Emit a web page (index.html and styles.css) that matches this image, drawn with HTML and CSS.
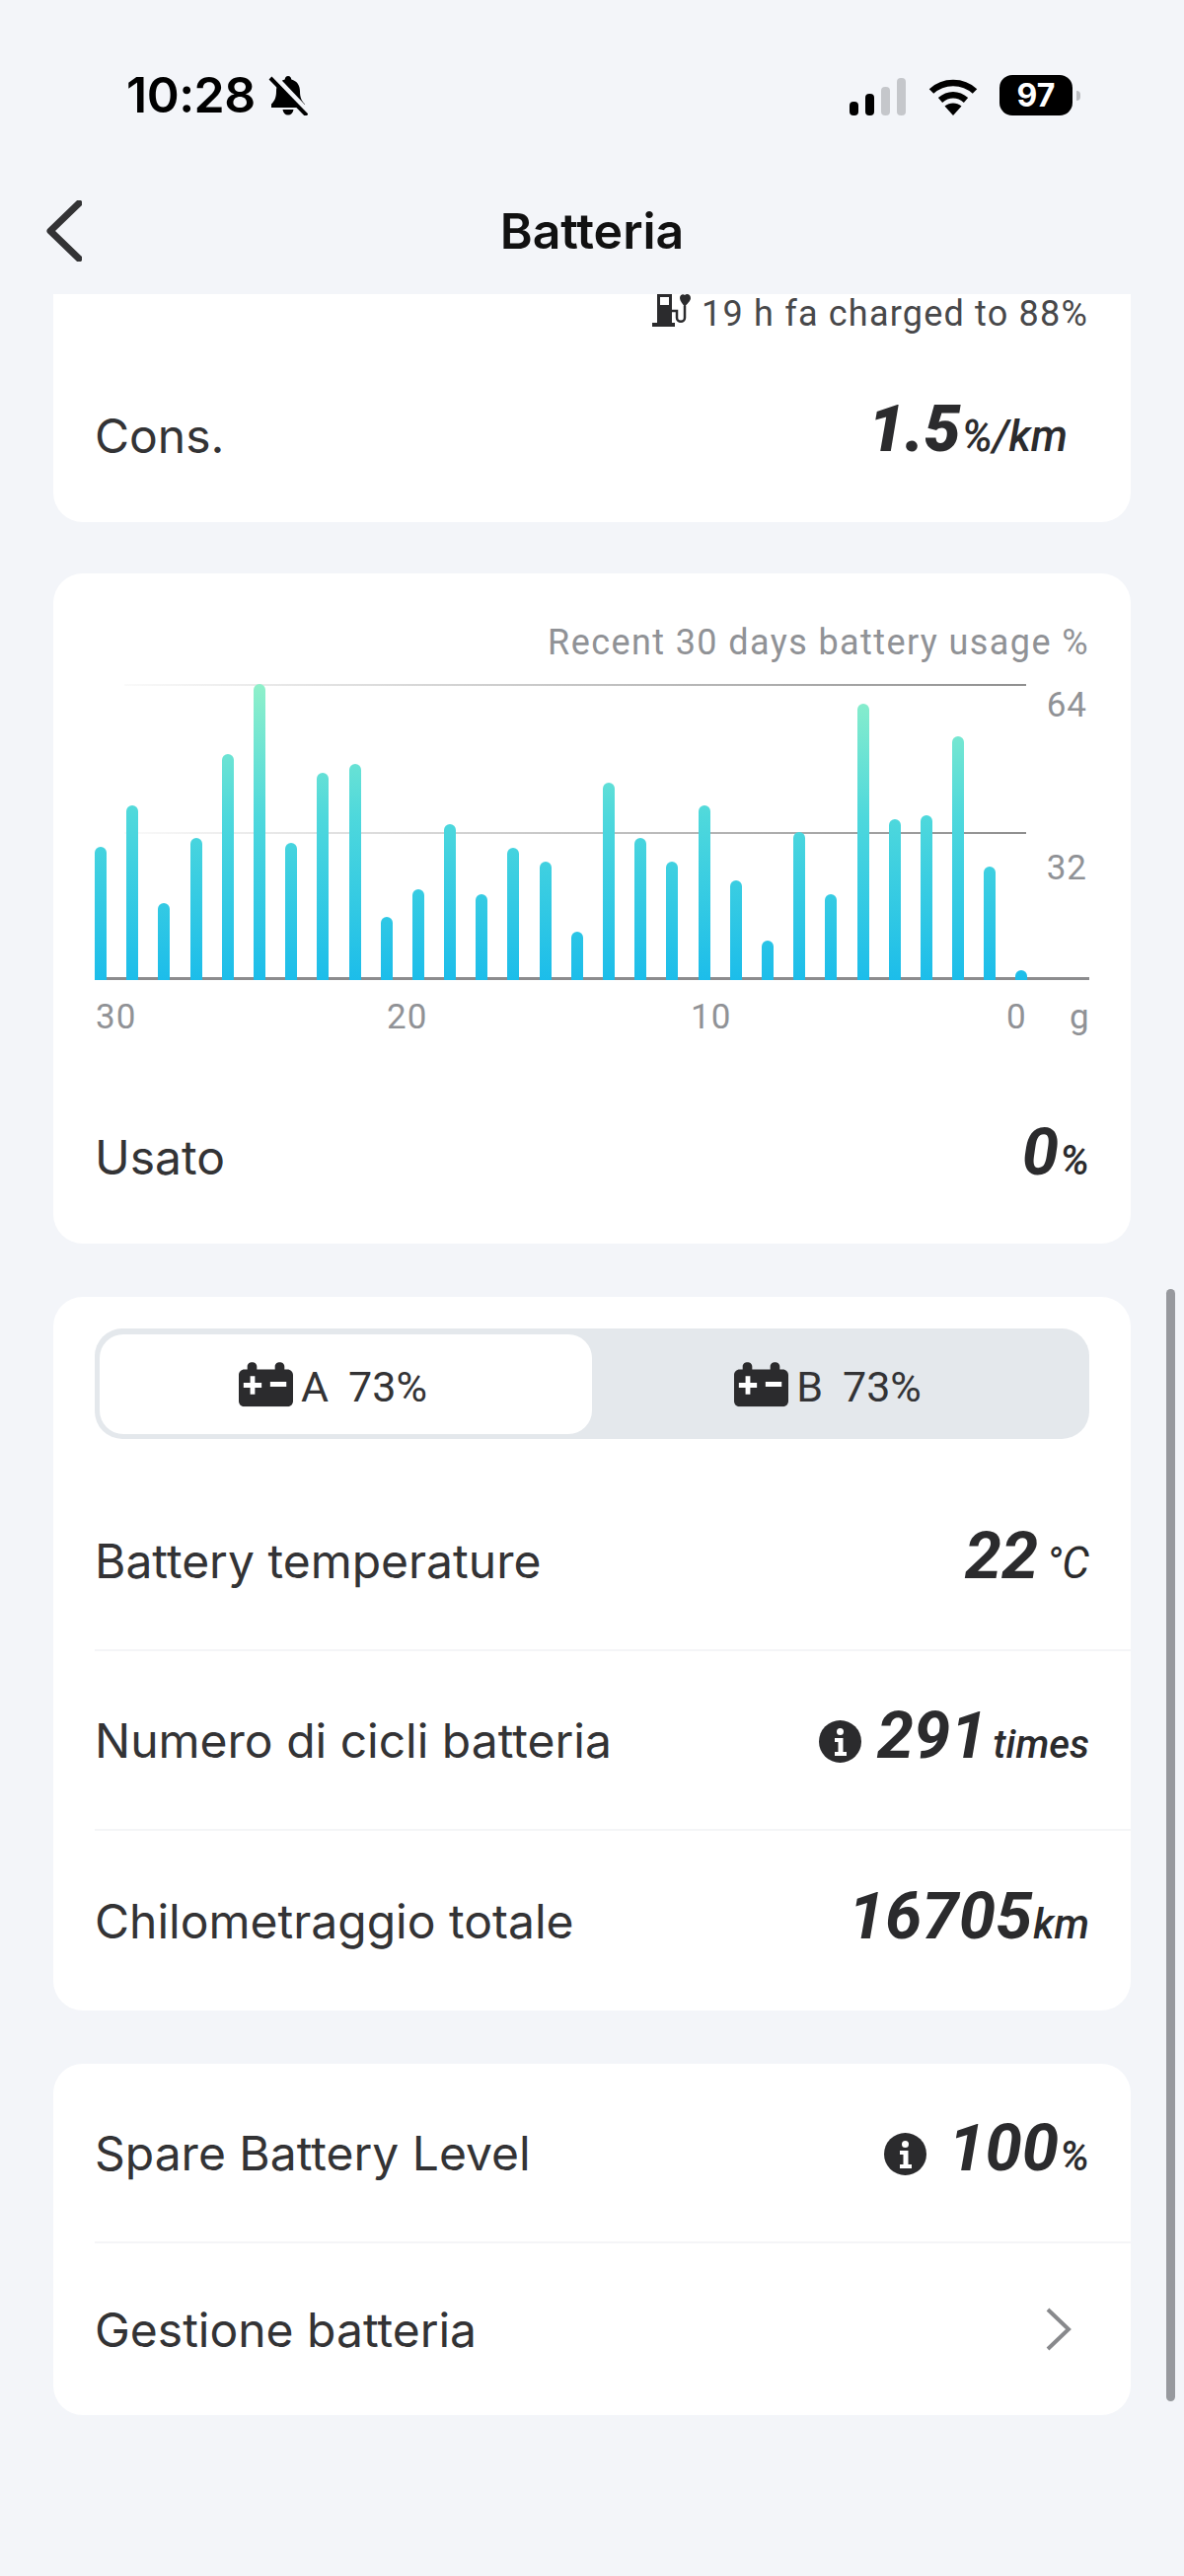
FILE: index.html
```html
<!DOCTYPE html>
<html lang="it">
<head>
<meta charset="utf-8">
<title>Batteria</title>
<link rel="stylesheet" href="styles.css">
</head>
<body>
<div class="screen">
  <header class="status">
    <div class="status-left">
      <span class="time">10:28</span>
      <svg class="bell" viewBox="0 0 40 41"><path d="M20 1c2 0 3 1.500 3.300 3.500 5.700 1.500 8.700 6 8.700 12 0 6 1.500 9.500 5 13v3.500H3V29.500c3.500-3.500 5-7 5-13 0-6 3-10.500 8.700-12C17 2.500 18 1 20 1zM14.500 35h11c-.5 3.500-2.500 5.500-5.500 5.500s-5-2-5.500-5.500z"/><path class="bell-gap" d="M5 0l35 37"/><path class="bell-line" d="M2 3l37 38"/></svg>
    </div>
    <div class="status-right">
      <div class="signal">
        <span class="sig sig1"></span><span class="sig sig2"></span><span class="sig sig3 off"></span><span class="sig sig4 off"></span>
      </div>
      <svg class="wifi" viewBox="0 0 50 38"><path class="wifi-arc" d="M3 13.500C15 2 35 2 47 13.500"/><path class="wifi-arc" d="M12 22.500c8-7 18-7 26 0"/><path d="M16.500 28.500c5-4 12-4 17 0L25 38z"/></svg>
      <div class="batt"><span class="batt-body">97</span><span class="batt-nub"></span></div>
    </div>
  </header>

  <nav class="nav">
    <svg class="back" viewBox="0 0 36 62"><path d="M33 3L4 31l29 28"/></svg>
    <h1 class="title">Batteria</h1>
  </nav>

  <main class="content">
    <section class="card card-clipped">
      <div class="charged">
        <svg class="pump" viewBox="0 0 40 33"><path fill-rule="evenodd" d="M5 0h15v29h3v4H0v-4h5zM8 3v8h9V3z"/><path class="pump-cable" d="M20 17h5v7c0 5 8 5 8 0V12"/><path d="M28 4c0-3 3-5 5-3 2-2 6-1 6 3 0 3-4 6-6 9-2-3-5-6-5-9z"/></svg>
        <span>19 h fa charged to 88%</span>
      </div>
      <div class="row row-cons">
        <span class="label">Cons.</span>
        <span class="value value-cons"><b class="num num-cons">1.5</b><i class="unit unit-cons">%/km</i></span>
      </div>
    </section>

    <section class="card card-chart">
      <p class="chart-title">Recent 30 days battery usage %</p>
      <div class="chart">
        <span class="grid-line grid-top"></span>
        <span class="grid-line grid-mid"></span>
        <span class="y-label y-64">64</span>
        <span class="y-label y-32">32</span>
        <div class="bars">
          <span class="bar" style="height:135px"></span>
          <span class="bar" style="height:177px"></span>
          <span class="bar" style="height:78px"></span>
          <span class="bar" style="height:144px"></span>
          <span class="bar" style="height:229px"></span>
          <span class="bar" style="height:300px"></span>
          <span class="bar" style="height:139px"></span>
          <span class="bar" style="height:210px"></span>
          <span class="bar" style="height:219px"></span>
          <span class="bar" style="height:64px"></span>
          <span class="bar" style="height:92px"></span>
          <span class="bar" style="height:158px"></span>
          <span class="bar" style="height:87px"></span>
          <span class="bar" style="height:134px"></span>
          <span class="bar" style="height:120px"></span>
          <span class="bar" style="height:49px"></span>
          <span class="bar" style="height:200px"></span>
          <span class="bar" style="height:144px"></span>
          <span class="bar" style="height:120px"></span>
          <span class="bar" style="height:177px"></span>
          <span class="bar" style="height:101px"></span>
          <span class="bar" style="height:40px"></span>
          <span class="bar" style="height:150px"></span>
          <span class="bar" style="height:87px"></span>
          <span class="bar" style="height:280px"></span>
          <span class="bar" style="height:163px"></span>
          <span class="bar" style="height:167px"></span>
          <span class="bar" style="height:247px"></span>
          <span class="bar" style="height:115px"></span>
          <span class="bar" style="height:10px"></span>
        </div>
      </div>
      <div class="x-axis"><span>30</span><span>20</span><span>10</span><span>0</span><span>g</span></div>
      <div class="row row-usato">
        <span class="label">Usato</span>
        <span class="value"><b class="num">0</b><i class="unit">%</i></span>
      </div>
    </section>

    <section class="card card-packs">
      <div class="segment">
        <div class="seg-tab seg-active">
          <svg class="pack" viewBox="0 0 57 47"><use href="#pack-icon"/></svg>
          <span class="seg-text">A</span><span class="seg-text seg-pct">73%</span>
        </div>
        <div class="seg-tab">
          <svg class="pack" viewBox="0 0 57 47"><use href="#pack-icon"/></svg>
          <span class="seg-text">B</span><span class="seg-text seg-pct">73%</span>
        </div>
      </div>
      <div class="row">
        <span class="label">Battery temperature</span>
        <span class="value"><b class="num">22</b><i class="unit unit-deg">°C</i></span>
      </div>
      <div class="row">
        <span class="label">Numero di cicli batteria</span>
        <span class="value">
          <svg class="info" viewBox="0 0 43 43"><use href="#info-icon"/></svg>
          <b class="num">291</b><i class="unit unit-times">times</i>
        </span>
      </div>
      <div class="row row-last">
        <span class="label">Chilometraggio totale</span>
        <span class="value"><b class="num">16705</b><i class="unit">km</i></span>
      </div>
    </section>

    <section class="card">
      <div class="row">
        <span class="label">Spare Battery Level</span>
        <span class="value">
          <svg class="info info-spare" viewBox="0 0 43 43"><use href="#info-icon"/></svg>
          <b class="num">100</b><i class="unit">%</i>
        </span>
      </div>
      <div class="row row-short row-last">
        <span class="label">Gestione batteria</span>
        <svg class="chev" viewBox="0 0 26 44"><path d="M2 2l21 20L2 42"/></svg>
      </div>
    </section>
  </main>

  <div class="scrollbar"></div>

  <svg class="defs" aria-hidden="true">
    <symbol id="pack-icon" viewBox="0 0 57 47">
      <path fill="#2b2b2d" d="M9 8V5c0-6 10-6 10 0v3h19V5c0-6 10-6 10 0v3h3c3.500 0 6 2.500 6 6v27c0 3.500-2.500 6-6 6H6c-3.500 0-6-2.500-6-6V14c0-3.500 2.500-6 6-6z"/>
      <path fill="#fff" d="M12 15h5v7h7v5h-7v7h-5v-7H5v-5h7zM33 21h17v5H33z"/>
    </symbol>
    <symbol id="info-icon" viewBox="0 0 43 43">
      <circle cx="21.500" cy="21.500" r="21.500" fill="#2b2b2d"/>
      <circle cx="21.500" cy="11.500" r="3.500" fill="#fff"/>
      <path fill="#fff" d="M16 18h8.500v14H28v4H16v-4h3.500V22H16z"/>
    </symbol>
  </svg>
</div>
</body>
</html>
```

FILE: styles.css
```css
* { box-sizing: border-box; }

html, body { margin: 0; padding: 0; }

body {
  background: #f3f5f9;
  font-family: Inter, "Liberation Sans", sans-serif;
  color: #333335;
}

.screen {
  position: relative;
  width: 1200px;
  height: 2610px;
  overflow: hidden;
}

/* status bar */
.status {
  height: 170px;
  padding: 76px 105px 0 128px;
  display: flex;
  justify-content: space-between;
  align-items: flex-start;
  color: #000;
}
.status-left { display: flex; align-items: center; gap: 13px; height: 41px; }
.time { font-size: 50px; font-weight: 600; line-height: 41px; letter-spacing: -0.5px; }
.bell { width: 40px; height: 41px; }
.bell-gap { stroke: #f3f5f9; stroke-width: 5; fill: none; }
.bell-line { stroke: #000; stroke-width: 4; fill: none; }

.status-right { display: flex; align-items: center; height: 41px; }
.signal { display: flex; align-items: flex-end; gap: 7px; height: 38px; margin-right: 23px; margin-top: 3px; }
.sig { width: 9px; border-radius: 4px; background: #000; }
.sig1 { height: 14px; }
.sig2 { height: 22px; }
.sig3 { height: 29px; }
.sig4 { height: 38px; }
.sig.off { background: #c5c7cb; }
.wifi { width: 50px; height: 38px; margin-top: 3px; margin-right: 22px; }
.wifi-arc { fill: none; stroke: #000; stroke-width: 6.500; }
.batt { display: flex; align-items: center; gap: 4px; }
.batt-body {
  width: 74px;
  height: 41px;
  border-radius: 13px;
  background: #000;
  color: #fff;
  font-size: 32px;
  font-weight: 700;
  line-height: 41px;
  text-align: center;
}
.batt-nub { width: 4px; height: 10px; border-radius: 0 4px 4px 0; background: #bcbec2; }

/* nav */
.nav {
  height: 128px;
  padding-left: 47px;
  display: grid;
  grid-template-columns: 1fr auto 1fr;
  align-items: center;
}
.back { width: 36px; height: 62px; fill: none; stroke: #333335; stroke-width: 7; stroke-linecap: round; stroke-linejoin: round; }
.title { grid-column: 2; margin: 0 0 0 -47px; font-size: 50px; font-weight: 600; color: #111; }

/* cards */
.content { padding: 0 54px; display: flex; flex-direction: column; gap: 54px; }
.card { background: #fff; border-radius: 30px; }
.card-clipped { border-radius: 0 0 30px 30px; margin-bottom: -2px; }
.card-chart { padding-top: 47px; }
.card-packs { padding-top: 32px; }

.charged {
  height: 40px;
  padding-right: 43px;
  display: flex;
  justify-content: flex-end;
  align-items: center;
  gap: 10px;
  font-family: Roboto, sans-serif;
  font-size: 36px;
  letter-spacing: 1.200px;
  color: #48484a;
}
.pump { width: 40px; height: 33px; fill: #2b2b2d; margin-bottom: 8px; }
.pump-cable { fill: none; stroke: #2b2b2d; stroke-width: 2.500; }

.row {
  height: 182px;
  margin-left: 42px;
  padding-right: 42px;
  display: flex;
  justify-content: space-between;
  align-items: center;
  border-bottom: 2px solid #f4f5f7;
}
.row-short { height: 174px; }
.row-cons { height: 176px; margin-top: 15px; padding-right: 64px; }
.row-usato { height: 176px; margin-top: 31px; }
.row-short, .row-cons, .row-usato, .row-last { border-bottom: 0; }

.label { font-size: 48px; color: #333335; }
.value { display: flex; align-items: baseline; padding-bottom: 10px; font-family: Roboto, sans-serif; font-style: italic; color: #2b2b2d; }
.value-cons { padding-bottom: 12px; }
.num { font-size: 67px; font-weight: 700; line-height: 1; }
.num-cons { font-size: 66px; font-weight: 900; }
.unit { font-size: 42px; font-weight: 500; margin-left: 1px; }
.unit-cons { font-size: 44px; }
.unit-deg { font-weight: 400; font-size: 44px; margin-left: 8px; }
.unit-times { margin-left: 6px; font-size: 40px; }
.info { width: 43px; height: 43px; margin-right: 16px; margin-top: 12px; align-self: center; }
.info-spare { margin-right: 22px; }
.chev { width: 26px; height: 44px; margin-right: 18px; fill: none; stroke: #88898c; stroke-width: 4; }

/* chart */
.chart-title {
  margin: 0 42px 20px 0;
  padding-top: 1px;
  font-family: Roboto, sans-serif;
  font-size: 36px;
  line-height: 44px;
  letter-spacing: 1.400px;
  text-align: right;
  color: #909296;
}
.chart { position: relative; margin: 0 42px; height: 300px; }
.grid-line {
  position: absolute;
  left: 30px;
  width: 914px;
  height: 2px;
  background: linear-gradient(90deg, #fafafa, #8f8f8f);
}
.grid-top { top: 0; }
.grid-mid { top: 150px; }
.y-label {
  position: absolute;
  right: 2px;
  font-family: Roboto, sans-serif;
  font-size: 35px;
  line-height: 44px;
  letter-spacing: 1px;
  color: #909296;
}
.y-64 { top: 0; }
.y-32 { top: 165px; }
.bars {
  position: relative;
  height: 300px;
  display: flex;
  align-items: flex-end;
  gap: 20.200px;
  border-bottom: 3px solid #8c8c8e;
}
.bar {
  flex: none;
  width: 12px;
  margin-bottom: -3px;
  border-radius: 6px 6px 0 0;
  background: linear-gradient(180deg, #8ff0ca 0%, #4ed8dc 45%, #1cbdea 100%) bottom / 100% 300px no-repeat;
}
.x-axis {
  margin-top: 16px;
  padding-left: 43px;
  display: grid;
  grid-template-columns: 295px 308px 320px 64px auto;
  font-family: Roboto, sans-serif;
  font-size: 35px;
  line-height: 44px;
  letter-spacing: 1px;
  color: #909296;
}

/* segment */
.segment {
  margin: 0 42px 33px;
  height: 112px;
  padding: 6px 0 5px 5px;
  display: grid;
  grid-template-columns: 499px 1fr;
  border-radius: 28px;
  background: #e4e8ec;
}
.seg-tab {
  padding-right: 26px;
  display: flex;
  justify-content: center;
  align-items: center;
  font-size: 43px;
  font-family: Roboto, sans-serif;
  color: #333335;
}
.seg-active { background: #fff; border-radius: 24px; }
.pack { width: 55px; height: 47px; margin-right: 8px; }
.seg-text { padding-top: 5px; }
.seg-pct { margin-left: 20px; }

/* scrollbar indicator */
.scrollbar {
  position: absolute;
  left: 1182px;
  top: 1306px;
  width: 9px;
  height: 1127px;
  border-radius: 5px;
  background: #97999e;
}

.defs { position: absolute; width: 0; height: 0; }
```
